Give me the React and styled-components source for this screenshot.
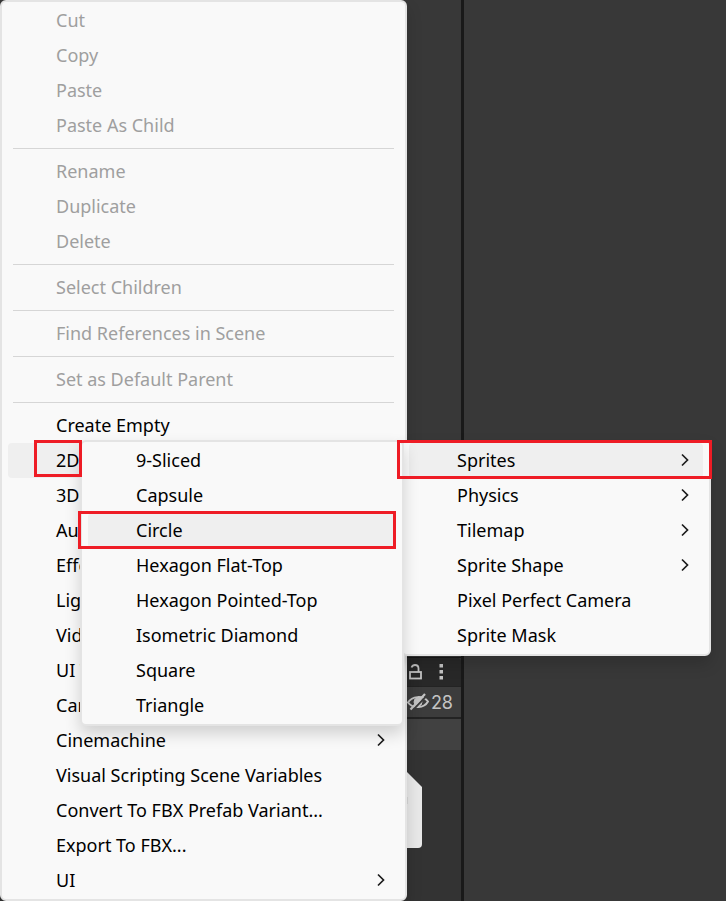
import React from "react";
import styled, {createGlobalStyle, css} from "styled-components";

const GlobalStyle = createGlobalStyle`
  * {
    box-sizing: border-box;
  }

  body {
    margin: 0;
    background-color: #383838;
    font-family: "Noto Sans", "Open Sans", sans-serif;
  }
`;

const Screen = styled.main`
  position: relative;
  display: flex;
  min-height: 100vh;
  overflow: hidden;
`;

const Dock = styled.section`
  width: 464px;
  border-right: 3px solid #191919;
  display: flex;
  flex-direction: column;
`;

const SceneArea = styled.div`
  flex: 1;
`;

const ProjectPanel = styled.div`
  height: 244px;
  background-color: #333333;
  border-top: 1px solid #191919;
`;

const PanelBar = styled.div`
  display: flex;
  align-items: center;
  justify-content: flex-end;
  color: #c4c4c4;

  svg {
    display: block;
  }
`;

const TabBar = styled(PanelBar)`
  height: 29px;
  gap: 10px;
  padding-right: 11px;
  background-color: #282828;
  border-bottom: 1px solid #232323;
  border-top-right-radius: 4px;
`;

const CountBar = styled(PanelBar)`
  height: 32px;
  gap: 2px;
  padding-right: 8px;
  background-color: #3c3c3c;
  border-bottom: 2px solid #232323;
  font-family: Inter, sans-serif;
  font-size: 18px;
`;

const PathBar = styled(PanelBar)`
  height: 31px;
  background-color: #414141;
`;

const Asset = styled.div`
  display: flex;
  justify-content: flex-end;
  padding: 21px 39px 0 0;

  svg {
    display: block;
  }
`;

const IconButton = styled.button`
  display: block;
  padding: 0;
  border: none;
  background: none;
  color: inherit;
`;

const Menu = styled.ul`
  margin: 0;
  padding: 1px 6px;
  list-style: none;
  background-color: #f9f9f9;
  border: 2px solid #e4e4e4;
  border-radius: 6px;
  box-shadow: 0 8px 16px rgba(0, 0, 0, 0.16);
`;

const ContextMenu = styled(Menu)`
  position: absolute;
  top: 0;
  left: 0;
  width: 407px;
`;

const ObjectMenu = styled(Menu)`
  position: absolute;
  top: 440px;
  left: 401px;
  width: 310px;
`;

const SpritesMenu = styled(Menu)`
  position: absolute;
  top: 440px;
  left: 80px;
  width: 324px;
`;

const MenuButton = styled.button`
  display: flex;
  align-items: center;
  justify-content: space-between;
  width: 100%;
  height: 35px;
  padding: 0 14px 2px 48px;
  border: none;
  border-radius: 4px;
  background: none;
  color: #000000;
  font: inherit;
  font-size: 18px;
  line-height: 24px;
  text-align: left;
  white-space: nowrap;

  &:disabled {
    color: #9f9f9f;
  }

  ${(props) =>
    props.$active &&
    css`
      background-color: #efefef;
    `}
`;

const Separator = styled.li`
  height: 1px;
  margin: 5px;
  background-color: #d6d6d6;
`;

const Highlight = styled.div`
  position: absolute;
  border: 3px solid #ee1c25;
  pointer-events: none;
`;

const ObjectHighlight = styled(Highlight)`
  top: 440px;
  left: 34px;
  width: 48px;
  height: 37px;
`;

const SpritesHighlight = styled(Highlight)`
  top: 440px;
  left: 397px;
  width: 315px;
  height: 39px;
`;

const CircleHighlight = styled(Highlight)`
  top: 511px;
  left: 78px;
  width: 318px;
  height: 38px;
`;

const contextItems = [
  {label: "Cut", disabled: true},
  {label: "Copy", disabled: true},
  {label: "Paste", disabled: true},
  {label: "Paste As Child", disabled: true},
  null,
  {label: "Rename", disabled: true},
  {label: "Duplicate", disabled: true},
  {label: "Delete", disabled: true},
  null,
  {label: "Select Children", disabled: true},
  null,
  {label: "Find References in Scene", disabled: true},
  null,
  {label: "Set as Default Parent", disabled: true},
  null,
  {label: "Create Empty"},
  {label: "2D Object", submenu: true, active: true},
  {label: "3D Object", submenu: true},
  {label: "Audio", submenu: true},
  {label: "Effects", submenu: true},
  {label: "Light", submenu: true},
  {label: "Video", submenu: true},
  {label: "UI Toolkit", submenu: true},
  {label: "Camera"},
  {label: "Cinemachine", submenu: true},
  {label: "Visual Scripting Scene Variables"},
  {label: "Convert To FBX Prefab Variant..."},
  {label: "Export To FBX..."},
  {label: "UI", submenu: true},
];

const objectItems = [
  {label: "Sprites", submenu: true, active: true},
  {label: "Physics", submenu: true},
  {label: "Tilemap", submenu: true},
  {label: "Sprite Shape", submenu: true},
  {label: "Pixel Perfect Camera"},
  {label: "Sprite Mask"},
];

const spriteItems = [
  {label: "9-Sliced"},
  {label: "Capsule"},
  {label: "Circle", active: true},
  {label: "Hexagon Flat-Top"},
  {label: "Hexagon Pointed-Top"},
  {label: "Isometric Diamond"},
  {label: "Square"},
  {label: "Triangle"},
];

function Chevron() {
  return (
    <svg width="8" height="14" viewBox="0 0 8 14" fill="none">
      <path d="M1 1.500 6.500 7 1 12.500" stroke="#1c1c1c" strokeWidth="1.700" />
    </svg>
  );
}

function LockIcon() {
  return (
    <svg width="14" height="16" viewBox="0 0 14 16" fill="none" stroke="currentColor">
      <rect x="2" y="8" width="11" height="6.500" strokeWidth="1.800" />
      <path d="M3.500 3.500C4.300 1.500 5.500 1 7 1c2.300 0 3.500 1.500 3.500 3.500V8" strokeWidth="1.800" />
    </svg>
  );
}

function DotsIcon() {
  return (
    <svg width="18" height="16" viewBox="0 0 18 16" fill="currentColor">
      <path d="M7.500 0h3.500v3.500H7.500zM7.500 6h3.500v3.500H7.500zM7.500 12h3.500v3.500H7.500z" />
    </svg>
  );
}

function HiddenIcon() {
  return (
    <svg width="22" height="18" viewBox="0 0 22 18" fill="none" stroke="currentColor">
      <path d="M1 9.500C5 3 16 2 21 8.500 17 15.500 6 16 1 9.500Z" strokeWidth="2" />
      <circle cx="11" cy="9" r="4" fill="currentColor" />
      <path d="M5.500 17.500 20 2.500" stroke="#3c3c3c" strokeWidth="1.800" />
      <path d="M3.500 16.500 18 1" strokeWidth="2.200" />
    </svg>
  );
}

function FileIcon() {
  return (
    <svg width="60" height="78" viewBox="0 0 60 78">
      <path d="M0 0h44l16 16v57q0 4-4 4H0z" fill="#e9e9e9" />
      <path d="M45.500 26v7" stroke="#d8d8d8" />
    </svg>
  );
}

// A null item stands for a separator
function MenuItems({items}) {
  return items.map((item, index) =>
    item ? (
      <li key={index}>
        <MenuButton disabled={item.disabled} $active={item.active}>
          {item.label}
          {item.submenu && <Chevron />}
        </MenuButton>
      </li>
    ) : (
      <Separator key={index} role="separator" />
    )
  );
}

function App() {
  return (
    <>
      <GlobalStyle />
      <Screen>
        <Dock>
          <SceneArea />
          <ProjectPanel>
            <TabBar>
              <IconButton aria-label="Lock">
                <LockIcon />
              </IconButton>
              <IconButton aria-label="Options">
                <DotsIcon />
              </IconButton>
            </TabBar>
            <CountBar>
              <HiddenIcon />
              <span>28</span>
            </CountBar>
            <PathBar />
            <Asset>
              <FileIcon />
            </Asset>
          </ProjectPanel>
        </Dock>

        <ContextMenu>
          <MenuItems items={contextItems} />
        </ContextMenu>
        <ObjectMenu>
          <MenuItems items={objectItems} />
        </ObjectMenu>
        <SpritesMenu>
          <MenuItems items={spriteItems} />
        </SpritesMenu>

        <ObjectHighlight />
        <SpritesHighlight />
        <CircleHighlight />
      </Screen>
    </>
  );
}

export default App;
